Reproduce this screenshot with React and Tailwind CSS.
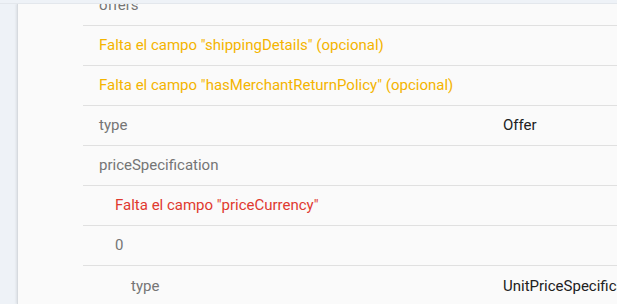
export default function App() {
  const rows = [
    { k: "offers", level: 0, color: "text-[#757575]" },
    { k: 'Falta el campo "shippingDetails" (opcional)', level: 1, color: "text-[#f4b400]" },
    { k: 'Falta el campo "hasMerchantReturnPolicy" (opcional)', level: 1, color: "text-[#f4b400]" },
    { k: "type", v: "Offer", level: 1, color: "text-[#757575]" },
    { k: "priceSpecification", level: 1, color: "text-[#757575]" },
    { k: 'Falta el campo "priceCurrency"', level: 2, color: "text-[#e0392f]" },
    { k: "0", level: 2, color: "text-[#757575]" },
    { k: "type", v: "UnitPriceSpecification", level: 3, color: "text-[#757575]" },
  ];
  const padFor = (lvl) =>
    lvl === 3 ? "pl-[48px]" : lvl === 2 ? "pl-[32px]" : "pl-[16px]";
  return (
    <div
      className="w-[617px] h-[304px] overflow-hidden bg-[#eef2f7] flex flex-col"
      style={{ fontFamily: "Roboto, 'Liberation Sans', sans-serif" }}
    >
      <div className="h-[4px] shrink-0 bg-[#eef2f7] border-b border-[#e3e7ec] relative z-10"></div>
      <div className="flex flex-1 min-h-0">
        <div className="w-[17px] shrink-0 bg-[#eef2f7]"></div>
        <div className="flex-1 bg-[#fafafa] border-l border-[#d6dadf] shadow-[-1px_0_2px_rgba(0,0,0,0.08)] overflow-hidden">
          <div className="mt-[-18px] ml-[65px]">
            {rows.map((r, i) => (
              <div
                key={i}
                className={`h-[40px] flex items-center text-[15px] whitespace-nowrap ${
                  i < rows.length - 1 ? "border-b border-[#e0e0e0]" : ""
                }`}
              >
                <div className={`w-[420px] shrink-0 ${padFor(r.level)} ${r.color}`}>{r.k}</div>
                {r.v && <div className="text-[#212121]">{r.v}</div>}
              </div>
            ))}
          </div>
        </div>
      </div>
    </div>
  );
}
